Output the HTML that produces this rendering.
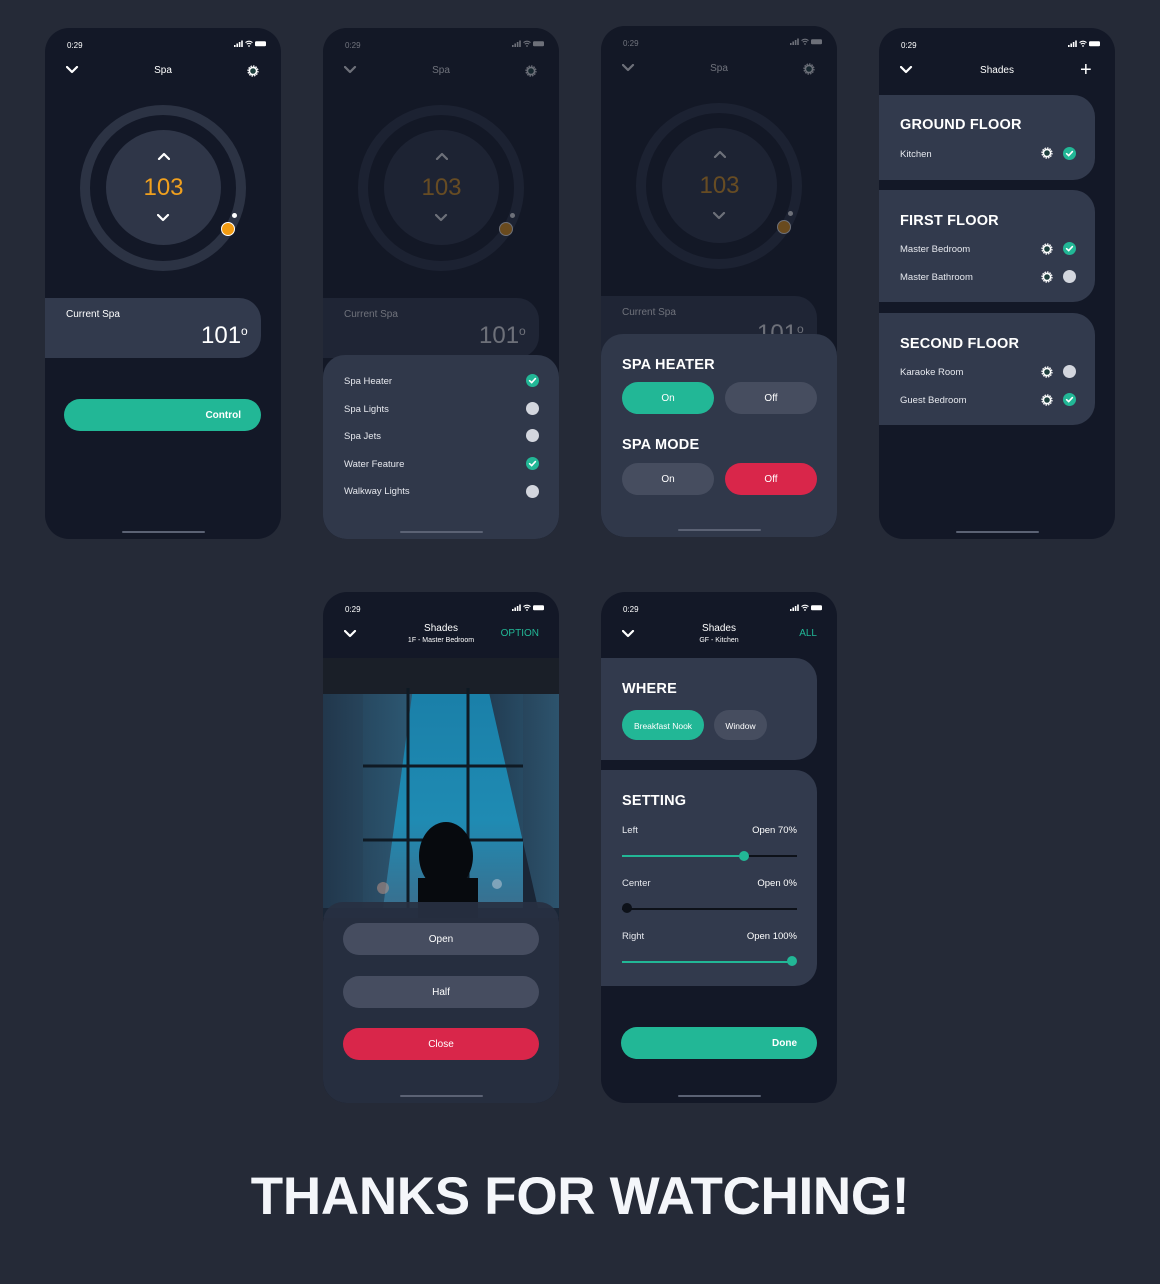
<!DOCTYPE html>
<html><head><meta charset="utf-8"><style>
*{margin:0;padding:0;box-sizing:border-box}
body{width:1160px;height:1284px;background:#252a37;font-family:"Liberation Sans",sans-serif;color:#fff;position:relative;overflow:hidden}
.ph{position:absolute;width:236px;height:511px;background:#131827;border-radius:24px;overflow:hidden}
.a{position:absolute}
.t{position:absolute;font-size:8px;color:#fff;top:13px;left:22px}
.sb{position:absolute;top:12px;right:14px}
.hd{position:absolute;top:37px;left:0;width:236px;text-align:center;font-size:10px}
.chev{position:absolute;left:21px;top:38px}
.home{position:absolute;left:77px;bottom:6px;width:83px;height:2.5px;border-radius:2px;background:#5b6274}
.card{position:absolute;left:0;width:216px;background:#323a4d;border-radius:0 22px 22px 0}
.h{font-weight:bold;font-size:14.5px;position:absolute;left:21px;letter-spacing:.2px}
.it{position:absolute;left:21px;font-size:9.5px;color:#e6e8ee}
.btn{position:absolute;height:32px;border-radius:16px;text-align:center;line-height:34px;font-size:10px}
.dim{position:absolute;inset:0;background:rgba(19,24,39,.62)}
</style></head><body>

<svg width="0" height="0" style="position:absolute">
<defs>
<g id="stat"><rect x="0" y="5" width="1.6" height="2" fill="#fff"/><rect x="2.4" y="3.5" width="1.6" height="3.5" fill="#fff"/><rect x="4.8" y="2" width="1.6" height="5" fill="#fff"/><rect x="7.2" y="0.5" width="1.6" height="6.5" fill="#fff"/>
<path d="M11.5 2.6 Q15 -0.3 18.5 2.6 M12.8 4.2 Q15 2.5 17.2 4.2" stroke="#fff" stroke-width="1.1" fill="none"/><circle cx="15" cy="6" r="0.9" fill="#fff"/>
<rect x="21" y="1.3" width="11" height="5" rx="1.2" fill="#fff"/></g>
<g id="chev"><path d="M1 1 L6 6 L11 1" stroke="#fff" stroke-width="2.2" fill="none" stroke-linecap="round" stroke-linejoin="round"/></g>
<g id="gear"><circle cx="6" cy="6" r="3.6" stroke="#fff" stroke-width="1.6" fill="#1d3f3d"/><circle cx="6" cy="6" r="5" stroke="#fff" stroke-width="1.2" fill="none" stroke-dasharray="1.6 1"/></g>
<g id="chk"><circle cx="6.5" cy="6.5" r="6.5" fill="#22b796"/><path d="M3.6 6.7 L5.7 8.6 L9.4 4.6" stroke="#fff" stroke-width="1.6" fill="none" stroke-linecap="round"/></g>
<g id="off"><circle cx="6.5" cy="6.5" r="6.5" fill="#d3d6de"/></g>
</defs></svg>

<!-- PHONE 1 -->
<div class="ph" style="left:45px;top:28px">
 <div class="t">0:29</div><svg class="sb" width="33" height="8"><use href="#stat"/></svg>
 <svg class="chev" width="13" height="8"><use href="#chev"/></svg>
 <div class="hd">Spa</div>
 <svg class="a" style="left:202px;top:37px" width="12" height="12"><use href="#gear"/></svg>
 <div class="a" style="left:35px;top:77px;width:166px;height:166px;border-radius:50%;border:10px solid #2c3344"></div>
 <div class="a" style="left:61px;top:102px;width:115px;height:115px;border-radius:50%;background:#2f3648"></div>
 <svg class="a" style="left:112px;top:124px" width="13" height="8"><g transform="rotate(180 6.5 4)"><use href="#chev" /></g></svg>
 <div class="a" style="left:61px;top:146px;width:115px;text-align:center;font-size:24px;color:#f0a01e">103</div>
 <svg class="a" style="left:112px;top:186px" width="13" height="8"><use href="#chev"/></svg>
 <div class="a" style="left:176px;top:194px;width:14px;height:14px;border-radius:50%;background:#f39c12;border:1.5px solid #fff"></div>
 <div class="a" style="left:187px;top:185px;width:5px;height:5px;border-radius:50%;background:#fff"></div>
 <div class="card" style="top:270px;height:60px"></div>
 <div class="a" style="left:21px;top:281px;font-size:10px">Current Spa</div>
 <div class="a" style="left:156px;top:294px;font-size:24px">101<span style="font-size:12px;vertical-align:8px">o</span></div>
 <div class="btn" style="left:19px;top:371px;width:197px;background:#22b796;text-align:right;padding-right:20px;font-weight:bold">Control</div>
 <div class="home"></div>
</div>

<!-- PHONE 2 -->
<div class="ph" style="left:323px;top:28px">
 <div class="t">0:29</div><svg class="sb" width="33" height="8"><use href="#stat"/></svg>
 <svg class="chev" width="13" height="8"><use href="#chev"/></svg>
 <div class="hd">Spa</div>
 <svg class="a" style="left:202px;top:37px" width="12" height="12"><use href="#gear"/></svg>
 <div class="a" style="left:35px;top:77px;width:166px;height:166px;border-radius:50%;border:10px solid #2c3344"></div>
 <div class="a" style="left:61px;top:102px;width:115px;height:115px;border-radius:50%;background:#2f3648"></div>
 <svg class="a" style="left:112px;top:124px" width="13" height="8"><g transform="rotate(180 6.5 4)"><use href="#chev"/></g></svg>
 <div class="a" style="left:61px;top:146px;width:115px;text-align:center;font-size:24px;color:#f0a01e">103</div>
 <svg class="a" style="left:112px;top:186px" width="13" height="8"><use href="#chev"/></svg>
 <div class="a" style="left:176px;top:194px;width:14px;height:14px;border-radius:50%;background:#f39c12;border:1.5px solid #fff"></div>
 <div class="a" style="left:187px;top:185px;width:5px;height:5px;border-radius:50%;background:#fff"></div>
 <div class="card" style="top:270px;height:60px"></div>
 <div class="a" style="left:21px;top:281px;font-size:10px">Current Spa</div>
 <div class="a" style="left:156px;top:294px;font-size:24px">101<span style="font-size:12px;vertical-align:8px">o</span></div>
 <div class="dim"></div>
 <div class="a" style="left:0;top:327px;width:236px;height:190px;background:#30384a;border-radius:22px"></div>
 <div class="it" style="top:348px">Spa Heater</div><svg class="a" style="left:203px;top:346px" width="13" height="13"><use href="#chk"/></svg>
 <div class="it" style="top:376px">Spa Lights</div><svg class="a" style="left:203px;top:374px" width="13" height="13"><use href="#off"/></svg>
 <div class="it" style="top:403px">Spa Jets</div><svg class="a" style="left:203px;top:401px" width="13" height="13"><use href="#off"/></svg>
 <div class="it" style="top:431px">Water Feature</div><svg class="a" style="left:203px;top:429px" width="13" height="13"><use href="#chk"/></svg>
 <div class="it" style="top:458px">Walkway Lights</div><svg class="a" style="left:203px;top:457px" width="13" height="13"><use href="#off"/></svg>
 <div class="home"></div>
</div>

<!-- PHONE 3 -->
<div class="ph" style="left:601px;top:26px">
 <div class="t">0:29</div><svg class="sb" width="33" height="8"><use href="#stat"/></svg>
 <svg class="chev" width="13" height="8"><use href="#chev"/></svg>
 <div class="hd">Spa</div>
 <svg class="a" style="left:202px;top:37px" width="12" height="12"><use href="#gear"/></svg>
 <div class="a" style="left:35px;top:77px;width:166px;height:166px;border-radius:50%;border:10px solid #2c3344"></div>
 <div class="a" style="left:61px;top:102px;width:115px;height:115px;border-radius:50%;background:#2f3648"></div>
 <svg class="a" style="left:112px;top:124px" width="13" height="8"><g transform="rotate(180 6.5 4)"><use href="#chev"/></g></svg>
 <div class="a" style="left:61px;top:146px;width:115px;text-align:center;font-size:24px;color:#f0a01e">103</div>
 <svg class="a" style="left:112px;top:186px" width="13" height="8"><use href="#chev"/></svg>
 <div class="a" style="left:176px;top:194px;width:14px;height:14px;border-radius:50%;background:#f39c12;border:1.5px solid #fff"></div>
 <div class="a" style="left:187px;top:185px;width:5px;height:5px;border-radius:50%;background:#fff"></div>
 <div class="card" style="top:270px;height:60px"></div>
 <div class="a" style="left:21px;top:281px;font-size:10px">Current Spa</div>
 <div class="a" style="left:156px;top:294px;font-size:24px">101<span style="font-size:12px;vertical-align:8px">o</span></div>
 <div class="dim"></div>
 <div class="a" style="left:0;top:308px;width:236px;height:210px;background:#30384a;border-radius:22px"></div>
 <div class="h" style="top:331px">SPA HEATER</div>
 <div class="btn" style="left:21px;top:356px;width:92px;background:#22b796">On</div>
 <div class="btn" style="left:124px;top:356px;width:92px;background:#464d5f">Off</div>
 <div class="h" style="top:411px">SPA MODE</div>
 <div class="btn" style="left:21px;top:437px;width:92px;background:#464d5f">On</div>
 <div class="btn" style="left:124px;top:437px;width:92px;background:#d9264a">Off</div>
 <div class="home"></div>
</div>

<!-- PHONE 4 -->
<div class="ph" style="left:879px;top:28px">
 <div class="t">0:29</div><svg class="sb" width="33" height="8"><use href="#stat"/></svg>
 <svg class="chev" width="13" height="8"><use href="#chev"/></svg>
 <div class="hd">Shades</div>
 <div class="a" style="left:201px;top:34px;font-size:20px;line-height:16px">+</div>
 <div class="card" style="top:67px;height:85px"></div>
 <div class="h" style="top:89px">GROUND FLOOR</div>
 <div class="it" style="top:121px">Kitchen</div>
 <svg class="a" style="left:162px;top:119px" width="12" height="12"><use href="#gear"/></svg><svg class="a" style="left:184px;top:119px" width="13" height="13"><use href="#chk"/></svg>
 <div class="card" style="top:162px;height:112px"></div>
 <div class="h" style="top:185px">FIRST FLOOR</div>
 <div class="it" style="top:216px">Master Bedroom</div>
 <svg class="a" style="left:162px;top:215px" width="12" height="12"><use href="#gear"/></svg><svg class="a" style="left:184px;top:214px" width="13" height="13"><use href="#chk"/></svg>
 <div class="it" style="top:244px">Master Bathroom</div>
 <svg class="a" style="left:162px;top:243px" width="12" height="12"><use href="#gear"/></svg><svg class="a" style="left:184px;top:242px" width="13" height="13"><use href="#off"/></svg>
 <div class="card" style="top:285px;height:112px"></div>
 <div class="h" style="top:308px">SECOND FLOOR</div>
 <div class="it" style="top:339px">Karaoke Room</div>
 <svg class="a" style="left:162px;top:338px" width="12" height="12"><use href="#gear"/></svg><svg class="a" style="left:184px;top:337px" width="13" height="13"><use href="#off"/></svg>
 <div class="it" style="top:367px">Guest Bedroom</div>
 <svg class="a" style="left:162px;top:366px" width="12" height="12"><use href="#gear"/></svg><svg class="a" style="left:184px;top:365px" width="13" height="13"><use href="#chk"/></svg>
 <div class="home"></div>
</div>

<!-- PHONE 5 -->
<div class="ph" style="left:323px;top:592px">
 <div class="t">0:29</div><svg class="sb" width="33" height="8"><use href="#stat"/></svg>
 <svg class="chev" width="13" height="8"><use href="#chev"/></svg>
 <div class="hd" style="top:31px;line-height:11px">Shades<br><span style="font-size:7px">1F - Master Bedroom</span></div>
 <div class="a" style="right:20px;top:36px;font-size:10px;color:#22b796">OPTION</div>
 <svg class="a" style="left:0;top:66px" width="236" height="260">
  <defs><linearGradient id="sky" x1="0" y1="0" x2="0" y2="1"><stop offset="0" stop-color="#1a7fa8"/><stop offset=".6" stop-color="#1f8bb3"/><stop offset="1" stop-color="#3a6f8e"/></linearGradient>
  <linearGradient id="cur" x1="0" y1="0" x2="1" y2="0"><stop offset="0" stop-color="#22384d"/><stop offset="1" stop-color="#2e5670"/></linearGradient></defs>
  <rect width="236" height="260" fill="#1a2636"/>
  <rect x="40" y="30" width="160" height="220" fill="url(#sky)"/>
  <path d="M0 30 L90 30 L60 250 L0 250Z" fill="url(#cur)" opacity=".95"/>
  <path d="M236 30 L165 30 L215 250 L236 250Z" fill="url(#cur)" opacity=".95"/>
  <rect x="0" y="0" width="236" height="36" fill="#1a1f28"/>
  <g stroke="#0f1a24" stroke-width="3"><line x1="85" y1="30" x2="85" y2="250"/><line x1="145" y1="30" x2="145" y2="250"/><line x1="40" y1="108" x2="200" y2="108"/><line x1="40" y1="182" x2="200" y2="182"/></g>
  <ellipse cx="123" cy="198" rx="27" ry="34" fill="#070a0e"/>
  <rect x="95" y="220" width="60" height="40" fill="#070a0e"/>
  <circle cx="174" cy="226" r="5" fill="#9fb8c9" opacity=".7"/><circle cx="60" cy="230" r="6" fill="#c79a8a" opacity=".5"/>
 </svg>
 <div class="a" style="left:0;top:310px;width:236px;height:210px;background:rgba(40,48,66,.93);border-radius:20px"></div>
 <div class="btn" style="left:20px;top:331px;width:196px;background:#464d60">Open</div>
 <div class="btn" style="left:20px;top:384px;width:196px;background:#464d60">Half</div>
 <div class="btn" style="left:20px;top:436px;width:196px;background:#d9264a">Close</div>
 <div class="home"></div>
</div>

<!-- PHONE 6 -->
<div class="ph" style="left:601px;top:592px">
 <div class="t">0:29</div><svg class="sb" width="33" height="8"><use href="#stat"/></svg>
 <svg class="chev" width="13" height="8"><use href="#chev"/></svg>
 <div class="hd" style="top:31px;line-height:11px">Shades<br><span style="font-size:7px">GF - Kitchen</span></div>
 <div class="a" style="right:20px;top:36px;font-size:10px;color:#22b796">ALL</div>
 <div class="card" style="top:66px;height:102px"></div>
 <div class="h" style="top:89px">WHERE</div>
 <div class="btn" style="left:21px;top:118px;width:82px;height:30px;line-height:32px;font-size:8.5px;background:#22b796">Breakfast Nook</div>
 <div class="btn" style="left:113px;top:118px;width:53px;height:30px;line-height:32px;font-size:8.5px;background:#464d5f">Window</div>
 <div class="card" style="top:178px;height:216px"></div>
 <div class="h" style="top:201px">SETTING</div>
 <div class="it" style="top:233px">Left</div><div class="a" style="right:40px;top:233px;font-size:9.5px">Open 70%</div>
 <div class="a" style="left:21px;top:263px;width:175px;height:1.5px;background:#0d1119"></div>
 <div class="a" style="left:21px;top:263px;width:122px;height:1.5px;background:#22b796"></div>
 <div class="a" style="left:138px;top:259px;width:10px;height:10px;border-radius:50%;background:#22b796"></div>
 <div class="it" style="top:286px">Center</div><div class="a" style="right:40px;top:286px;font-size:9.5px">Open 0%</div>
 <div class="a" style="left:21px;top:316px;width:175px;height:1.5px;background:#0d1119"></div>
 <div class="a" style="left:21px;top:311px;width:10px;height:10px;border-radius:50%;background:#0d1119"></div>
 <div class="it" style="top:339px">Right</div><div class="a" style="right:40px;top:339px;font-size:9.5px">Open 100%</div>
 <div class="a" style="left:21px;top:369px;width:170px;height:1.5px;background:#22b796"></div>
 <div class="a" style="left:186px;top:364px;width:10px;height:10px;border-radius:50%;background:#22b796"></div>
 <div class="btn" style="left:20px;top:435px;width:196px;background:#22b796;text-align:right;padding-right:20px;font-weight:bold">Done</div>
 <div class="home"></div>
</div>

<div class="a" style="left:0;top:1166px;width:1160px;text-align:center;font-size:53px;font-weight:bold;color:#f4f6fa;letter-spacing:-0.3px">THANKS FOR WATCHING!</div>
</body></html>
